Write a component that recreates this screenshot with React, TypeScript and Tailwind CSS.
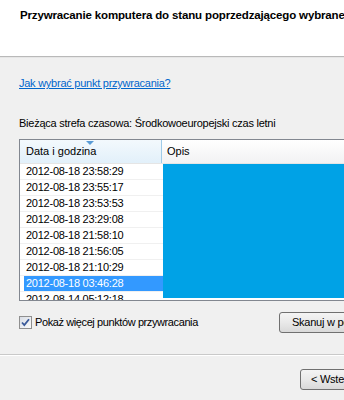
const ROWS = [
  "2012-08-18 23:58:29",
  "2012-08-18 23:55:17",
  "2012-08-18 23:53:53",
  "2012-08-18 23:29:08",
  "2012-08-18 21:58:10",
  "2012-08-18 21:56:05",
  "2012-08-18 21:10:29",
  "2012-08-18 03:46:28",
  "2012-08-14 05:12:18",
];

const SELECTED = 7;

function Checkbox() {
  return (
    <span className="w-[13px] h-[13px] border border-[#8f8f8f] bg-gradient-to-br from-[#d8dde6] to-[#fbfbfb] flex items-center justify-center shrink-0">
      <svg width="11" height="11" viewBox="0 0 11 11">
        <path d="M2 5.5 L4.3 8 L9 2.2" fill="none" stroke="#3a5a9a" strokeWidth="1.8" />
      </svg>
    </span>
  );
}

export default function App() {
  return (
    <div
      className="w-[344px] h-[400px] overflow-hidden bg-[#f0f0f0] text-[11px] tracking-[-0.25px] text-black"
      style={{ fontFamily: '"Liberation Sans", Arial, sans-serif' }}
    >
      {/* wizard header */}
      <div className="h-[56px] bg-white pl-[20px] pt-[8px]">
        <p className="font-bold text-[11.5px] tracking-[-0.15px] whitespace-nowrap leading-[14px]">
          Przywracanie komputera do stanu poprzedzającego wybrane zdarzenie
        </p>
      </div>
      <div className="h-px bg-[#b9b9b9]" />
      <div className="h-px bg-[#e6e6e6]" />

      <div className="w-[460px] pl-[19px]">
        <a className="block mt-[19px] leading-[13px] text-[#0066cc] underline whitespace-nowrap">
          Jak wybrać punkt przywracania?
        </a>

        <p className="mt-[27px] leading-[13px] whitespace-nowrap">
          Bieżąca strefa czasowa: Środkowoeuropejski czas letni
        </p>

        {/* restore point list */}
        <div className="mt-[9px] h-[162px] border border-[#828790] bg-white flex flex-col overflow-hidden">
          <div className="flex h-[24px] shrink-0 border-b border-[#e5e5e5]">
            <div className="relative w-[142px] shrink-0 bg-gradient-to-b from-[#f3f9fd] to-[#e2f0fa] border-r border-[#9fcbe8] flex items-center pl-[6px] tracking-normal">
              <svg className="absolute left-[66px] top-px" width="8" height="4" viewBox="0 0 8 4">
                <path d="M0 0 L8 0 L4 4 Z" fill="#5a9bd5" />
              </svg>
              Data i godzina
            </div>
            <div className="flex-1 bg-gradient-to-b from-white to-[#f2f2f3] border-r border-[#e0e0e0] flex items-center pl-[5px] tracking-normal">
              Opis
            </div>
          </div>
          <div className="flex flex-1 min-h-0">
            <div className="w-[143px] shrink-0 flex flex-col overflow-hidden">
              {ROWS.map((r, i) => (
                <div key={r} className="h-[16px] shrink-0 border-b border-[#f0f0f0] pl-[4px]">
                  <div
                    className={`h-full flex items-center pl-[2px] whitespace-nowrap ${
                      i === SELECTED ? "bg-[#3399ff] text-white" : ""
                    }`}
                  >
                    {r}
                  </div>
                </div>
              ))}
            </div>
            <div className="flex-1 flex flex-col">
              <div className="h-[134px] bg-[#00a2e6]" />
            </div>
          </div>
        </div>

        <div className="flex items-center mt-[11px]">
          <label className="w-[260px] flex items-center gap-[3px] whitespace-nowrap tracking-[-0.4px]">
            <Checkbox />
            Pokaż więcej punktów przywracania
          </label>
          <button className="w-[120px] h-[21px] rounded-[3px] border border-[#707070] bg-gradient-to-b from-[#f4f4f4] via-[#e9e9e9] to-[#d9d9d9] text-left pl-[12px] whitespace-nowrap">
            Skanuj w poszukiwaniu programów, których dotyczy problem
          </button>
        </div>
      </div>

      <div className="mt-[21px] h-px bg-[#c9c9c9]" />
      <div className="h-px bg-white" />

      <div className="pl-[300px] mt-[13px]">
        <button className="w-[80px] h-[21px] rounded-[3px] border border-[#707070] bg-gradient-to-b from-[#f4f4f4] via-[#e9e9e9] to-[#d9d9d9] text-left pl-[10px] whitespace-nowrap">
          &lt; Wstecz
        </button>
      </div>
    </div>
  );
}
